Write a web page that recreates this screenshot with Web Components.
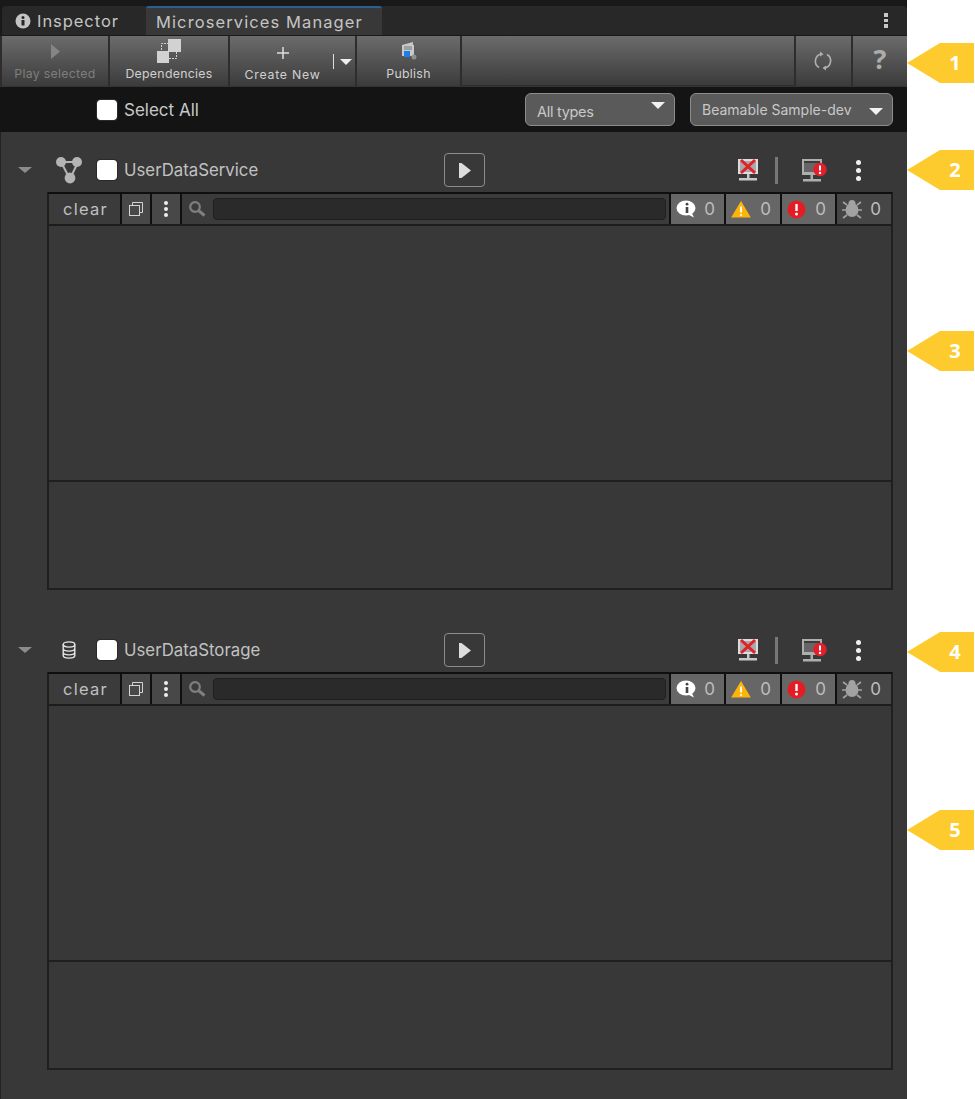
<!DOCTYPE html>
<html>
<head>
<meta charset="utf-8">
<title>Microservices Manager</title>
<style>
  html, body { margin: 0; height: 100%; background: #fff; }
  body { font-family: Inter, "Liberation Sans", sans-serif; }
</style>
</head>
<body>
<manager-page>
  <manager-tabs slot="top"></manager-tabs>
  <manager-toolbar slot="top"></manager-toolbar>
  <filter-bar slot="top"></filter-bar>
  <service-section name="UserDataService" icon="service"></service-section>
  <service-section name="UserDataStorage" icon="storage"></service-section>
  <call-out slot="rail" n="1" top="43"></call-out>
  <call-out slot="rail" n="2" top="67"></call-out>
  <call-out slot="rail" n="3" top="141"></call-out>
  <call-out slot="rail" n="4" top="261"></call-out>
  <call-out slot="rail" n="5" top="138"></call-out>
</manager-page>
<script>
const icons = {
  play: `<svg width="9" height="15" viewBox="0 0 9 15"><path d="M0 0l9 7.500-9 7.500z" fill="#858585"/></svg>`,
  deps: `<svg width="26" height="26" viewBox="0 0 26 26"><rect x="12" y="1" width="13" height="13" fill="#d2d2d2"/><rect x="1" y="13" width="12" height="12" fill="#d2d2d2"/><path d="M5.500 12V5.500h6.500M20.500 14v6.500H13" fill="none" stroke="#d2d2d2" stroke-dasharray="2 1"/></svg>`,
  plus: `<svg width="12" height="12" viewBox="0 0 12 12"><path d="M6 0v12M0 6h12" stroke="#ddd" stroke-width="1.500"/></svg>`,
  publish: `<svg width="16" height="18" viewBox="0 0 16 18"><path d="M1 3l11-3v3h1v11H1z" fill="#c9c9c9"/><path d="M3 5h8M3 7h8" stroke="#777"/><rect x="3" y="9" width="6" height="6" fill="#1a7fe8"/><circle cx="13" cy="15" r="2.500" fill="#8f8f8f"/></svg>`,
  refresh: `<svg width="20" height="20" viewBox="0 0 20 20" fill="none" stroke="#b0b0b0" stroke-width="1.600"><path d="M6 16.500A7.300 7.300 0 0 1 8.500 3"/><path d="M14 3.500A7.300 7.300 0 0 1 11.500 17"/><path d="M7 .5l3.500 2.700L7 5.500z" fill="#b0b0b0" stroke="none"/><path d="M13 14.500l-3.500 2.500 3.500 2.500z" fill="#b0b0b0" stroke="none"/></svg>`,
  service: `<svg width="28" height="28" viewBox="0 0 28 28"><path d="M6 6h17M6 6l9 17M23 6l-8 17" stroke="#b4b4b4" stroke-width="2"/><circle cx="6" cy="6" r="5" fill="#b4b4b4"/><circle cx="22" cy="6" r="5" fill="#b4b4b4"/><circle cx="15" cy="22" r="5.400" fill="#b4b4b4"/></svg>`,
  storage: `<svg width="14" height="18" viewBox="0 0 14 18" fill="none" stroke="#e4e4e4" stroke-width="1.400"><ellipse cx="7" cy="3.500" rx="5.800" ry="2.600"/><path d="M1.200 3.500v11c0 1.500 2.600 2.600 5.800 2.600s5.800-1.100 5.800-2.600v-11M1.200 7.500c0 1.500 2.600 2.600 5.800 2.600s5.800-1.100 5.800-2.600M1.200 11.300c0 1.500 2.600 2.600 5.800 2.600s5.800-1.100 5.800-2.600"/></svg>`,
  stopped: `<svg width="22" height="24" viewBox="0 0 22 24"><rect x="1" y="1" width="20" height="15" fill="#dcdcdc"/><rect x="3" y="3" width="16" height="11" fill="#a8a8a8"/><rect x="10" y="16" width="2.500" height="4" fill="#c8c8c8"/><rect x="2" y="20" width="18" height="2.500" fill="#c8c8c8"/><path d="M4 2l14 13M18 2L4 15" stroke="#e0202a" stroke-width="3"/></svg>`,
  monitor: `<svg width="26" height="24" viewBox="0 0 26 24"><rect x="1" y="1" width="20" height="16" fill="#aeaeae"/><rect x="3" y="3" width="16" height="11" fill="#666"/><rect x="3" y="3" width="16" height="2" fill="#3c3c3c"/><rect x="9.500" y="17" width="2.500" height="4" fill="#aeaeae"/><rect x="2" y="21" width="18" height="2.500" fill="#aeaeae"/><circle cx="19" cy="11.500" r="6.700" fill="#e3202a"/><path d="M19 7.500v5" stroke="#fff" stroke-width="2"/><circle cx="19" cy="15" r="1.200" fill="#fff"/></svg>`,
  copy: `<svg width="16" height="16" viewBox="0 0 16 16" fill="none" stroke="#d4d4d4"><path d="M4.500 4.500V1.500h10v10h-3"/><rect x="1.500" y="4.500" width="10" height="10"/></svg>`,
  search: `<svg width="18" height="18" viewBox="0 0 18 18" fill="none" stroke="#7f7f7f"><circle cx="7" cy="7" r="4.800" stroke-width="2.200"/><path d="M10.500 10.500l6 5" stroke-width="3"/></svg>`,
  info: `<svg width="20" height="18" viewBox="0 0 20 18"><ellipse cx="10" cy="8" rx="9.500" ry="7.500" fill="#fff"/><path d="M11 14l7 3.500-3-6z" fill="#fff"/><circle cx="11" cy="4.200" r="1.400" fill="#444"/><path d="M11 7v6" stroke="#444" stroke-width="2.600"/></svg>`,
  warn: `<svg width="20" height="17" viewBox="0 0 20 17"><path d="M10 0l9.800 16.600H.2z" fill="#fdb40b"/><path d="M10 5.500v6" stroke="#fff" stroke-width="1.800"/><circle cx="10" cy="14" r="1.100" fill="#fff"/></svg>`,
  error: `<svg width="19" height="19" viewBox="0 0 19 19"><circle cx="9.500" cy="9.500" r="9" fill="#e61c24"/><path d="M9.500 4v7" stroke="#fff" stroke-width="2.400"/><circle cx="9.500" cy="14" r="1.500" fill="#fff"/></svg>`,
  bug: `<svg width="20" height="20" viewBox="0 0 20 20"><ellipse cx="10" cy="11" rx="6.500" ry="7" fill="#a2a2a2"/><circle cx="10" cy="4.500" r="3.500" fill="#a2a2a2"/><path d="M5 6L1 3M15 6l4-3M4 11H0M16 11h4M5 16l-4 3M15 16l4 3" stroke="#a2a2a2" stroke-width="1.600"/></svg>`,
};

class ManagerPage extends HTMLElement {
  constructor() {
    super();
    this.attachShadow({ mode: 'open' }).innerHTML = `
    <style>
      :host { display: flex; min-height: 1099px; background: #fff; }
      .panel { width: 907px; display: flex; flex-direction: column; background: #383838; }
      .top { display: flex; flex-direction: column; }
      .main { flex: 1; border-left: 1px solid #232323; padding: 18px 14px 0 46px; display: flex; flex-direction: column; gap: 40px; }
      .rail { flex: 1; display: flex; flex-direction: column; }
    </style>
    <div class="panel">
      <div class="top"><slot name="top"></slot></div>
      <div class="main"><slot></slot></div>
    </div>
    <div class="rail"><slot name="rail"></slot></div>`;
  }
}

class ManagerTabs extends HTMLElement {
  constructor() {
    super();
    this.attachShadow({ mode: 'open' }).innerHTML = `
    <style>
      :host { display: flex; height: 36px; box-sizing: border-box; padding: 6px 0 1px 2px; background: #191919; color: #c4c4c4; font-size: 16.500px; letter-spacing: .95px; }
      .bar { flex: 1; display: flex; background: #282828; border-radius: 4px 4px 0 0; }
      .tab { display: flex; align-items: center; gap: 6px; padding-left: 13px; width: 131px; }
      .tab svg { flex: none; }
      .active { width: 236px; box-sizing: border-box; padding: 0 0 0 10px; background: #383838; border-top: 2px solid #2a5f90; border-radius: 3px 3px 0 0; letter-spacing: 1.100px; }
      .menu { margin: auto 19px auto auto; display: flex; flex-direction: column; gap: 2px; }
      .menu i { width: 4px; height: 3.500px; background: #c8c8c8; }
    </style>
    <div class="bar">
      <div class="tab"><svg width="16" height="16" viewBox="0 0 16 16"><circle cx="8" cy="8" r="7.500" fill="#c4c4c4"/><circle cx="8" cy="4.500" r="1.500" fill="#282828"/><path d="M8 7v5.500" stroke="#282828" stroke-width="3"/></svg><span>Inspector</span></div>
      <div class="tab active">Microservices Manager</div>
      <div class="menu"><i></i><i></i><i></i></div>
    </div>`;
  }
}

class ToolButton extends HTMLElement {
  constructor() {
    super();
    this.attachShadow({ mode: 'open' }).innerHTML = `
    <style>
      :host { display: flex; flex-direction: column; align-items: center; box-sizing: border-box; height: 50px; background: linear-gradient(#6b6b6b, #3b3b3b); color: #d0d0d0; font-size: 12.300px; letter-spacing: .3px; }
      :host([dim]) { color: #7e7e7e; }
      :host([low]) { padding-right: 20px; letter-spacing: .75px; }
      .ico { height: 30px; display: flex; align-items: center; justify-content: center; }
      :host([low]) .ico { height: 31px; padding-top: 2px; box-sizing: border-box; }
    </style>
    <div class="ico"><slot name="ico"></slot></div>
    <div><slot></slot></div>`;
  }
}

class ManagerToolbar extends HTMLElement {
  constructor() {
    super();
    const btn = (w, label, ico, extra = '') => `<tool-button style="width:${w}px" ${extra}><span slot="ico">${ico}</span>${label}</tool-button>`;
    this.attachShadow({ mode: 'open' }).innerHTML = `
    <style>
      :host { display: flex; gap: 2px; height: 51px; box-sizing: border-box; padding: 0 0 1px 2px; background: #2d2d2d; border-bottom: 1px solid #3a3232; }
      .spacer { flex: 1; background: linear-gradient(#6b6b6b, #3b3b3b); }
      .side { width: 54px; height: 50px; display: flex; align-items: center; justify-content: center; background: linear-gradient(#6b6b6b, #3b3b3b); }
      .side.wide { width: 55px; padding-right: 2px; box-sizing: border-box; }
      .q { color: #adadad; font: bold 27px "Open Sans", sans-serif; margin-top: -6px; }
      .create { position: relative; }
      .pipe { position: absolute; left: 103px; top: 18px; width: 1px; height: 15px; background: #ddd; }
      .arrow { position: absolute; left: 110px; top: 23px; width: 0; height: 0; border: 6px solid transparent; border-top: 6px solid #eee; border-bottom: 0; }
      svg { display: block; }
    </style>
    ${btn(106, 'Play selected', icons.play, 'dim')}
    ${btn(118, 'Dependencies', icons.deps)}
    <div class="create">${btn(125, 'Create New', icons.plus, 'low')}<i class="pipe"></i><i class="arrow"></i></div>
    ${btn(103, 'Publish', icons.publish)}
    <div class="spacer"></div>
    <div class="side wide">${icons.refresh}</div>
    <div class="side"><span class="q">?</span></div>`;
  }
}

class CheckBox extends HTMLElement {
  constructor() {
    super();
    this.attachShadow({ mode: 'open' }).innerHTML = `
    <style>
      :host { display: block; width: 22px; height: 22px; box-sizing: border-box; background: #fff; background-clip: padding-box; border: 1px solid #2a2a2a; border-radius: 4px; }
    </style>`;
  }
}

class DropDown extends HTMLElement {
  constructor() {
    super();
    this.attachShadow({ mode: 'open' }).innerHTML = `
    <style>
      :host { display: flex; align-items: center; justify-content: space-between; box-sizing: border-box; height: 33px; background: #5a5a5a; border: 1.500px solid #8d8d8d; border-radius: 6px; padding: 0 9px 0 11px; color: #c8c8c8; font-size: 14.500px; }
      i { width: 0; height: 0; margin-top: 3px; border: 7px solid transparent; border-top: 7px solid #f2f2f2; border-bottom: 0; }
      :host([up]) i { margin-top: -8px; }
      :host([up]) span { margin-top: 3px; letter-spacing: -.3px; }
      :host(:not([up])) span { font-size: 14px; }
    </style>
    <span><slot></slot></span><i></i>`;
  }
}

class FilterBar extends HTMLElement {
  constructor() {
    super();
    this.attachShadow({ mode: 'open' }).innerHTML = `
    <style>
      :host { display: flex; align-items: center; height: 45px; box-sizing: border-box; padding: 0 14px 0 96px; background: #141414; color: #c8c8c8; font-size: 17px; }
      span { margin-left: 6px; flex: 1; }
      .a { width: 150px; margin-right: 15px; }
      .b { width: 203px; }
    </style>
    <check-box></check-box><span>Select All</span>
    <drop-down class="a" up>All types</drop-down>
    <drop-down class="b">Beamable Sample-dev</drop-down>`;
  }
}

class LogCount extends HTMLElement {
  constructor() {
    super();
    this.attachShadow({ mode: 'open' }).innerHTML = `
    <style>
      :host { display: flex; align-items: center; justify-content: space-between; box-sizing: border-box; height: 30px; padding: 0 9px 0 5px; background: #666; color: #bdbdbd; font-size: 17px; }
      :host([off]) { background: #464646; padding-right: 10px; }
      span { display: flex; }
    </style>
    <span><slot name="ico"></slot></span><div><slot></slot></div>`;
  }
}

class LogPanel extends HTMLElement {
  constructor() {
    super();
    const count = (w, ico, off = '') => `<log-count style="width:${w}px" ${off}><span slot="ico" style="display:flex">${ico}</span>0</log-count>`;
    this.attachShadow({ mode: 'open' }).innerHTML = `
    <style>
      :host { display: flex; flex-direction: column; height: 398px; box-sizing: border-box; border: 2px solid #1f1f1f; border-top-color: #0f0f0f; color: #c0c0c0; }
      .bar { display: flex; gap: 2px; height: 32px; box-sizing: border-box; background: #0f0f0f; border-bottom: 2px solid #1c1c1c; }
      .clear { width: 71px; display: flex; align-items: center; justify-content: center; padding-left: 2px; box-sizing: border-box; background: #3b3b3b; font-size: 16.500px; letter-spacing: 1.300px; }
      .btn { width: 28px; display: flex; align-items: center; justify-content: center; background: #484848; }
      .dots { display: flex; flex-direction: column; gap: 2px; }
      .dots i { width: 4px; height: 4px; border-radius: 2px; background: #eee; }
      .search { flex: 1; display: flex; align-items: center; gap: 7px; padding: 0 3px 0 6px; background: #3b3b3b; }
      .search svg { flex: none; }
      .input { flex: 1; height: 22px; background: #2a2a2a; border: 1.500px solid #1f1f1f; border-radius: 4px; box-sizing: border-box; }
      .log { flex: 1; }
      .detail { height: 108px; box-sizing: border-box; border-top: 2px solid #1f1f1f; }
    </style>
    <div class="bar">
      <div class="clear">clear</div>
      <div class="btn">${icons.copy}</div>
      <div class="btn"><div class="dots"><i></i><i></i><i></i></div></div>
      <div class="search">${icons.search}<div class="input"></div></div>
      ${count(53, icons.info)}
      ${count(54, icons.warn)}
      ${count(53, icons.error)}
      ${count(54, icons.bug, 'off')}
    </div>
    <div class="log"></div>
    <div class="detail"></div>`;
  }
}

class ServiceSection extends HTMLElement {
  constructor() {
    super();
    const name = this.getAttribute('name');
    const icon = icons[this.getAttribute('icon')];
    this.attachShadow({ mode: 'open' }).innerHTML = `
    <style>
      :host { display: block; color: #c2c2c2; font-size: 16.800px; }
      .head { position: relative; display: flex; align-items: center; height: 40px; padding-bottom: 2px; }
      .fold { position: absolute; left: -29px; top: 17px; width: 0; height: 0; border: 7px solid transparent; border-top: 6px solid #8c8c8c; border-bottom: 0; }
      .ico { position: absolute; left: 7px; width: 30px; top: 5px; height: 30px; display: flex; align-items: center; justify-content: center; }
      check-box { margin-left: 49px; }
      .name { margin-left: 6px; width: 320px; }
      .run { width: 41px; height: 34px; box-sizing: border-box; border: 1.500px solid #8c8c8c; border-radius: 4px; display: flex; align-items: center; justify-content: center; }
      .right { margin-left: auto; margin-right: 32px; display: flex; align-items: center; }
      .sep { width: 3px; height: 27px; background: #777; margin: 0 23px 0 16px; }
      .more { display: flex; flex-direction: column; gap: 3px; margin-left: 29px; }
      .more i { width: 5px; height: 5px; border-radius: 50%; background: #f0f0f0; }
      svg { display: block; }
    </style>
    <div class="head">
      <i class="fold"></i>
      <div class="ico">${icon}</div>
      <check-box></check-box>
      <div class="name">${name}</div>
      <div class="run"><svg width="12" height="15" viewBox="0 0 12 15"><path d="M0 0h2.500L12 7.500 2.500 15H0z" fill="#dcdcdc"/></svg></div>
      <div class="right">
        ${icons.stopped}
        <div class="sep"></div>
        ${icons.monitor}
        <div class="more"><i></i><i></i><i></i></div>
      </div>
    </div>
    <log-panel></log-panel>`;
  }
}

class CallOut extends HTMLElement {
  constructor() {
    super();
    const top = this.getAttribute('top');
    this.attachShadow({ mode: 'open' }).innerHTML = `
    <style>
      :host { display: flex; width: 67px; height: 40px; margin-top: ${top}px; box-sizing: border-box; }
      .tip { width: 0; height: 0; border: 20px solid transparent; border-right: 33px solid #fecb2e; border-left: 0; }
      .num { width: 34px; background: #fecb2e; color: #fff; font: bold 20px/40px "Open Sans", sans-serif; text-align: center; padding-right: 4px; box-sizing: border-box; }
    </style>
    <div class="tip"></div><div class="num">${this.getAttribute('n')}</div>`;
  }
}

customElements.define('manager-page', ManagerPage);
customElements.define('manager-tabs', ManagerTabs);
customElements.define('tool-button', ToolButton);
customElements.define('manager-toolbar', ManagerToolbar);
customElements.define('check-box', CheckBox);
customElements.define('drop-down', DropDown);
customElements.define('filter-bar', FilterBar);
customElements.define('log-count', LogCount);
customElements.define('log-panel', LogPanel);
customElements.define('service-section', ServiceSection);
customElements.define('call-out', CallOut);
</script>
</body>
</html>
